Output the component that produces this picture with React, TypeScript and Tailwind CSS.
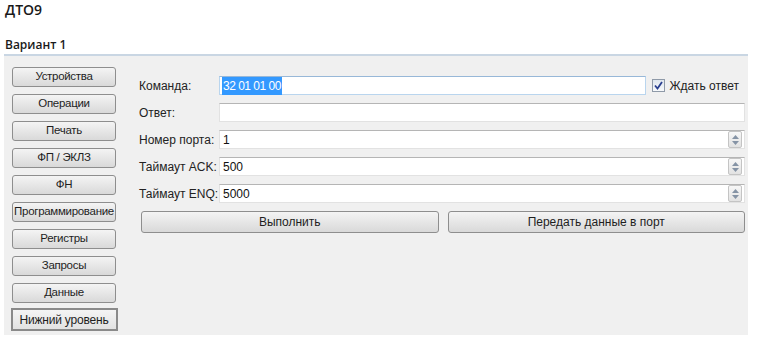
import React from 'react'

const navItems = [
  'Устройства',
  'Операции',
  'Печать',
  'ФП / ЭКЛЗ',
  'ФН',
  'Программирование',
  'Регистры',
  'Запросы',
  'Данные',
]

const ui = { fontFamily: '"Liberation Sans", Arial, sans-serif' }
const heading = { fontFamily: '"Open Sans", "Noto Sans", sans-serif' }

function NavButton({ label }: { label: string }) {
  return (
    <button className="h-[20px] w-[104px] rounded-[3px] border border-[#8e8e8e] bg-gradient-to-b from-[#f4f4f4] to-[#d9d9d9] text-[11.5px] leading-none tracking-[-0.3px] text-[#1e1e1e] whitespace-nowrap">
      {label}
    </button>
  )
}

function Spin() {
  return (
    <div className="flex h-[17px] w-[14px] flex-col items-center justify-center gap-[2px] rounded-[2px] border border-[#c4c4c4] bg-gradient-to-b from-[#f7f7f7] to-[#e2e2e2]">
      <svg width="7" height="4" viewBox="0 0 7 4"><path d="M0 4 L3.5 0 L7 4 Z" fill="#8593a5" /></svg>
      <svg width="7" height="4" viewBox="0 0 7 4"><path d="M0 0 L3.5 4 L7 0 Z" fill="#8593a5" /></svg>
    </div>
  )
}

function Field({ label, value, spin }: { label: string; value: string; spin?: boolean }) {
  return (
    <div className="flex h-[19px] items-center">
      <div className="w-[80px] whitespace-nowrap text-[12px] text-[#222]">{label}</div>
      <div className="flex h-[19px] flex-1 items-center border border-[#e2e2e2] border-t-[#b5b5b5] bg-white pl-[3px] pr-[2px] text-[12px] text-[#111]">
        <span className="flex-1">{value}</span>
        {spin && <Spin />}
      </div>
    </div>
  )
}

export default function App() {
  return (
    <div className="h-[354px] w-[762px] bg-white">
      <div className="h-[36px] px-[5px] pt-[1px] text-[14px] font-semibold leading-[18px] text-[#1a1a1a]" style={heading}>
        ДТО9
      </div>
      <div className="h-[18px] px-[5px] text-[12px] font-semibold leading-[18px] text-[#1a1a1a]" style={heading}>
        Вариант 1
      </div>
      <div
        className="ml-[4px] flex h-[281px] w-[744px] border-t-2 border-[#c9d6e3] bg-[#f0f0f0] pl-[8px] pr-[3px] pt-[11px]"
        style={ui}
      >
        <div className="flex w-[104px] flex-col items-center gap-[7px]">
          {navItems.map((item) => (
            <NavButton key={item} label={item} />
          ))}
          <button className="-mt-[2px] h-[23px] w-[107px] shrink-0 border-2 border-[#8a8a8a] bg-gradient-to-b from-[#f4f4f4] to-[#e2e2e2] text-[12px] tracking-[-0.2px] whitespace-nowrap text-[#1e1e1e]">
            Нижний уровень
          </button>
        </div>

        <div className="ml-[23px] flex flex-1 flex-col gap-[8px] pt-[9px]">
          <div className="flex h-[19px] items-center">
            <div className="w-[80px] text-[12px] text-[#222]">Команда:</div>
            <div className="flex h-[19px] flex-1 items-center border border-[#b9d5ee] border-t-[#98b8d8] bg-white pl-[2px] text-[12px]">
              <span className="bg-[#3399ff] px-[1px] tracking-[-0.5px] text-white">32 01 01 00</span>
            </div>
            <div className="ml-[6px] mr-[6px] flex items-center gap-[5px]">
              <div className="flex h-[13px] w-[13px] items-center justify-center border border-[#8f9aa8] bg-gradient-to-b from-[#dfe6ee] to-[#f7f9fb]">
                <svg width="9" height="9" viewBox="0 0 9 9">
                  <path d="M1 4.5 L3.5 7.5 L8 1" fill="none" stroke="#2a3f8f" strokeWidth="1.8" />
                </svg>
              </div>
              <span className="whitespace-nowrap text-[12px] text-[#222]">Ждать ответ</span>
            </div>
          </div>
          <Field label="Ответ:" value="" />
          <Field label="Номер порта:" value="1" spin />
          <Field label="Таймаут ACK:" value="500" spin />
          <Field label="Таймаут ENQ:" value="5000" spin />
          <div className="flex gap-[9px] pl-[2px]">
            <button className="h-[22px] flex-1 rounded-[3px] border border-[#8e8e8e] bg-gradient-to-b from-[#f4f4f4] to-[#d9d9d9] text-[12px] text-[#1e1e1e]">
              Выполнить
            </button>
            <button className="h-[22px] flex-1 rounded-[3px] border border-[#8e8e8e] bg-gradient-to-b from-[#f4f4f4] to-[#d9d9d9] text-[12px] text-[#1e1e1e]">
              Передать данные в порт
            </button>
          </div>
        </div>
      </div>
    </div>
  )
}
